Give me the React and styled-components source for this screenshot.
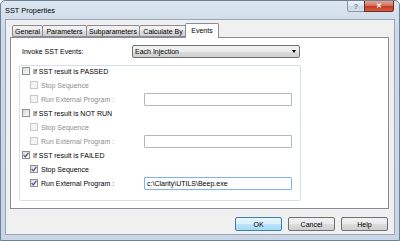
import React from "react";
import styled, { createGlobalStyle } from "styled-components";

const Global = createGlobalStyle`
	html, body {
		margin: 0;
		padding: 0;
		background: #fff;
	}
	body {
		font-family: "Liberation Sans", Arial, sans-serif;
		font-size: 7px;
		color: #000;
	}
`;

const Window = styled.div`
	width: 400px;
	height: 241px;
	box-sizing: border-box;
	border: 1px solid #6f8298;
	border-radius: 5px 5px 0 0;
	background: linear-gradient(180deg, #dce6f1 0%, #cdd9e7 12%, #c8d5e4 100%);
	display: flex;
	flex-direction: column;
	padding: 0 4px 5px 4px;
`;

const TitleBar = styled.div`
	height: 18px;
	display: flex;
	align-items: flex-start;
	justify-content: space-between;
`;

const Title = styled.div`
	font-size: 7.4px;
	margin-top: 5px;
	color: #000;
`;

const Controls = styled.div`
	display: flex;
	margin-right: 1px;
`;

const CtrlButton = styled.div`
	height: 11px;
	box-sizing: border-box;
	display: flex;
	align-items: center;
	justify-content: center;
	font-size: 7px;
	font-weight: bold;
	width: ${(p) => (p.close ? "30px" : "18px")};
	border: 1px solid ${(p) => (p.close ? "#6e2d26" : "#8796a8")};
	border-top: none;
	border-radius: ${(p) => (p.close ? "0 0 3px 0" : "0 0 0 3px")};
	margin-left: ${(p) => (p.close ? "-1px" : "0")};
	color: ${(p) => (p.close ? "#fff" : "#6e7c8c")};
	background: ${(p) =>
		p.close
			? "linear-gradient(180deg, #e4a598 0%, #d5705f 45%, #c53a27 55%, #d2603f 100%)"
			: "linear-gradient(180deg, #eef3f8 0%, #dfe7f0 45%, #ccd7e3 55%, #d7e1ec 100%)"};
`;

const Client = styled.div`
	flex: 1;
	background: #f0f0f0;
	border: 1px solid #96a7ba;
	display: flex;
	flex-direction: column;
	padding: 3px 5px 3px 4px;
`;

const TabStrip = styled.div`
	height: 14px;
	display: flex;
	align-items: flex-end;
	padding-left: 2px;
	position: relative;
	z-index: 1;
`;

const Tab = styled.div`
	box-sizing: border-box;
	width: ${(p) => p.w}px;
	height: ${(p) => (p.active ? 15 : 12)}px;
	margin-right: -1px;
	margin-bottom: ${(p) => (p.active ? -1 : 0)}px;
	margin-left: ${(p) => (p.active ? -1 : 0)}px;
	border: 1px solid #898c95;
	border-bottom: ${(p) => (p.active ? "none" : "1px solid #898c95")};
	border-radius: 2px 2px 0 0;
	background: ${(p) =>
		p.active ? "#fff" : "linear-gradient(180deg, #f3f3f3 0%, #ebebeb 50%, #dddddd 51%, #cfcfcf 100%)"};
	display: flex;
	align-items: center;
	justify-content: center;
	padding-bottom: ${(p) => (p.active ? 2 : 0)}px;
	font-size: 7px;
	white-space: nowrap;
	position: relative;
	z-index: ${(p) => (p.active ? 2 : 1)};
`;

const Panel = styled.div`
	height: 172px;
	box-sizing: border-box;
	border: 1px solid #898c95;
	background: #fff;
	padding: 7px 8px 7px 8px;
	display: flex;
	flex-direction: column;
	gap: 7px;
`;

const InvokeRow = styled.div`
	display: flex;
	align-items: center;
	height: 13px;
`;

const InvokeLabel = styled.div`
	width: 110px;
	padding-left: 3px;
	font-size: 7px;
`;

const Select = styled.div`
	width: 168px;
	height: 13px;
	box-sizing: border-box;
	border: 1px solid #707070;
	border-radius: 2px;
	background: linear-gradient(180deg, #f2f2f2 0%, #ebebeb 50%, #dddddd 51%, #cfcfcf 100%);
	display: flex;
	align-items: center;
	justify-content: space-between;
	padding: 0 3px 0 2px;
	font-size: 7px;
`;

const Arrow = styled.span`
	width: 0;
	height: 0;
	border-left: 2.5px solid transparent;
	border-right: 2.5px solid transparent;
	border-top: 3px solid #000;
`;

const Group = styled.div`
	width: 282px;
	flex: 1;
	box-sizing: border-box;
	border: 1px solid #d5dfe5;
	border-radius: 2px;
	padding: 0 0 0 2px;
`;

const List = styled.div`
	margin-top: -2px;
	display: flex;
	flex-direction: column;
`;

const Row = styled.div`
	height: 14px;
	display: flex;
	align-items: center;
	padding-left: ${(p) => (p.sub ? 8 : 0)}px;
	color: ${(p) => (p.disabled ? "#8d8d8d" : "#000")};
	font-size: 7px;
`;

const Box = styled.span`
	width: 8px;
	height: 8px;
	box-sizing: border-box;
	border: 1px solid ${(p) => (p.disabled ? "#c6c6c6" : "#8e8f8f")};
	background: ${(p) =>
		p.disabled ? "#f4f4f4" : "linear-gradient(135deg, #d9d9d9 0%, #ececec 60%, #f8f8f8 100%)"};
	margin-right: 3px;
	display: flex;
	align-items: center;
	justify-content: center;
	flex-shrink: 0;
`;

const RowLabel = styled.span`
	width: ${(p) => (p.w ? p.w + "px" : "auto")};
	white-space: nowrap;
`;

const Field = styled.div`
	width: 148px;
	height: 13px;
	box-sizing: border-box;
	border: 1px solid ${(p) => (p.focus ? "#7eb4ea" : "#b5b7bd")};
	border-radius: 1px;
	background: #fff;
	padding-left: 2px;
	display: flex;
	align-items: center;
	font-size: 7px;
	color: #000;
`;

const Footer = styled.div`
	margin-top: 8px;
	display: flex;
	justify-content: flex-end;
	gap: 6px;
	padding-right: 1px;
`;

const Button = styled.div`
	width: 47px;
	height: 14px;
	box-sizing: border-box;
	border: 1px solid ${(p) => (p.primary ? "#3c7fb1" : "#707070")};
	border-radius: 2px;
	background: ${(p) =>
		p.primary
			? "linear-gradient(180deg, #eaf6fd 0%, #d9f0fc 50%, #bee6fd 51%, #a7d9f5 100%)"
			: "linear-gradient(180deg, #f2f2f2 0%, #ebebeb 50%, #dddddd 51%, #cfcfcf 100%)"};
	display: flex;
	align-items: center;
	justify-content: center;
	font-size: 7px;
`;

const Check = ({ checked, disabled }) => (
	<Box disabled={disabled}>
		{checked && (
			<svg width="6" height="6" viewBox="0 0 6 6">
				<path d="M0.6 3.2 L2.3 4.9 L5.4 0.8" fill="none" stroke="#3d4f88" strokeWidth="1.2" />
			</svg>
		)}
	</Box>
);

const sections = [
	{ title: "If SST result is PASSED", on: false, path: "" },
	{ title: "If SST result is NOT RUN", on: false, path: "" },
	{ title: "If SST result is FAILED", on: true, path: "c:\\Clarity\\UTILS\\Beep.exe" },
];

const tabs = [
	{ name: "General", w: 31 },
	{ name: "Parameters", w: 45 },
	{ name: "Subparameters", w: 54 },
	{ name: "Calculate By", w: 48 },
	{ name: "Events", w: 34, active: true },
];

const App = () => {
	return (
		<>
			<Global />
			<Window>
				<TitleBar>
					<Title>SST Properties</Title>
					<Controls>
						<CtrlButton>?</CtrlButton>
						<CtrlButton close>✕</CtrlButton>
					</Controls>
				</TitleBar>
				<Client>
					<TabStrip>
						{tabs.map((t) => (
							<Tab key={t.name} w={t.w} active={t.active}>
								{t.name}
							</Tab>
						))}
					</TabStrip>
					<Panel>
						<InvokeRow>
							<InvokeLabel>Invoke SST Events:</InvokeLabel>
							<Select>
								<span>Each Injection</span>
								<Arrow />
							</Select>
						</InvokeRow>
						<Group>
							<List>
								{sections.map((s) => (
									<React.Fragment key={s.title}>
										<Row>
											<Check checked={s.on} />
											<RowLabel>{s.title}</RowLabel>
										</Row>
										<Row sub disabled={!s.on}>
											<Check checked={s.on} disabled={!s.on} />
											<RowLabel>Stop Sequence</RowLabel>
										</Row>
										<Row sub disabled={!s.on}>
											<Check checked={s.on} disabled={!s.on} />
											<RowLabel w={103}>Run External Program :</RowLabel>
											<Field focus={s.on}>{s.path}</Field>
										</Row>
									</React.Fragment>
								))}
							</List>
						</Group>
					</Panel>
					<Footer>
						<Button primary>OK</Button>
						<Button>Cancel</Button>
						<Button>Help</Button>
					</Footer>
				</Client>
			</Window>
		</>
	);
};

export default App;
